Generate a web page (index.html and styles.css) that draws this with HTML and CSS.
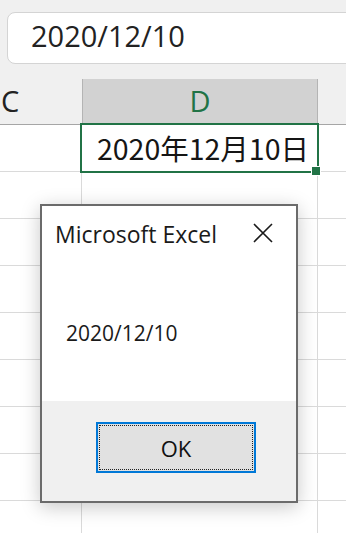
FILE: index.html
```html
<!DOCTYPE html>
<html lang="ja">
<head>
    <meta charset="UTF-8">
    <meta name="viewport" content="width=device-width, initial-scale=1.0">
    <title>Microsoft Excel</title>
    <link rel="stylesheet" href="styles.css">
</head>
<body>
    <div class="formula-area">
        <div class="formula-box">2020/12/10</div>
    </div>

    <div class="col-headers">
        <div class="col-head col-c">C</div>
        <div class="col-head col-d">D</div>
        <div class="col-head"></div>
    </div>

    <div class="sheet">
        <div class="row">
            <div class="cell"></div>
            <div class="cell cell-active">2020年12月10日<span class="fill-handle"></span></div>
            <div class="cell"></div>
        </div>
        <div class="row"><div class="cell"></div><div class="cell"></div><div class="cell"></div></div>
        <div class="row"><div class="cell"></div><div class="cell"></div><div class="cell"></div></div>
        <div class="row"><div class="cell"></div><div class="cell"></div><div class="cell"></div></div>
        <div class="row"><div class="cell"></div><div class="cell"></div><div class="cell"></div></div>
        <div class="row"><div class="cell"></div><div class="cell"></div><div class="cell"></div></div>
        <div class="row"><div class="cell"></div><div class="cell"></div><div class="cell"></div></div>
        <div class="row"><div class="cell"></div><div class="cell"></div><div class="cell"></div></div>
        <div class="row"><div class="cell"></div><div class="cell"></div><div class="cell"></div></div>
    </div>

    <div class="msgbox">
        <div class="msgbox-top">
            <div class="msgbox-title">
                <span>Microsoft Excel</span>
                <svg class="close-icon" width="20" height="20" viewBox="0 0 20 20">
                    <path d="M1 1 L19 19 M19 1 L1 19" stroke="#1a1a1a" stroke-width="1.6" fill="none"/>
                </svg>
            </div>
            <div class="msgbox-body">2020/12/10</div>
        </div>
        <div class="msgbox-footer">
            <button class="ok-btn"><span class="ok-focus">OK</span></button>
        </div>
    </div>
</body>
</html>
```

FILE: styles.css
```css
body {
    margin: 0;
    padding: 0;
    background-color: #f0f0f0;
    font-family: "Open Sans", "Noto Sans", sans-serif;
    color: #1a1a1a;
    overflow: hidden;
    height: 533px;
    position: relative;
}

.formula-area {
    height: 79px;
    padding: 12px 0 0 7px;
    box-sizing: border-box;
}

.formula-box {
    height: 52px;
    margin-right: -12px;
    box-sizing: border-box;
    background-color: white;
    border: 1px solid #d4d4d4;
    border-radius: 8px;
    padding-left: 23px;
    font-size: 29px;
    line-height: 45px;
    color: #222;
}

.col-headers,
.row {
    display: grid;
    grid-template-columns: 82px 236px 1fr;
}

.col-headers {
    height: 45px;
    border-bottom: 1px solid #a6a6a6;
}

.col-head {
    font-size: 29px;
    line-height: 44px;
    color: #222;
}

.col-c {
    padding-left: 1px;
}

.col-d {
    background-color: #d2d2d2;
    border-left: 1px solid #b4b4b4;
    border-right: 1px solid #b4b4b4;
    text-align: center;
    color: #217346;
}

.sheet {
    background-color: white;
}

.row {
    height: 47px;
    border-bottom: 1px solid #dadada;
    box-sizing: border-box;
}

.cell {
    border-right: 1px solid #dadada;
}

.cell:last-child {
    border-right: none;
}

.cell-active {
    position: relative;
    font-family: "Noto Sans CJK JP", sans-serif;
    font-size: 28.5px;
    line-height: 46px;
    text-align: right;
    padding-right: 8px;
    color: #151515;
}

.cell-active::after {
    content: "";
    position: absolute;
    left: -2px;
    top: -2px;
    right: -2px;
    bottom: -2px;
    border: 2.5px solid #217346;
}

.fill-handle {
    position: absolute;
    right: -4px;
    bottom: -5px;
    width: 8px;
    height: 8px;
    background-color: #217346;
    border: 1px solid white;
    z-index: 2;
}

.msgbox {
    position: absolute;
    left: 40px;
    top: 204px;
    width: 258px;
    height: 299px;
    box-sizing: border-box;
    border: 2px solid #6b6b6b;
    background-color: white;
    box-shadow: 0 4px 18px rgba(0, 0, 0, 0.22);
    display: flex;
    flex-direction: column;
}

.msgbox-top {
    height: 195px;
}

.msgbox-title {
    display: flex;
    justify-content: space-between;
    align-items: flex-start;
    padding: 17px 23px 0 13px;
    font-size: 23px;
    line-height: 23px;
}

.close-icon {
    display: block;
}

.msgbox-body {
    padding: 77px 0 0 24px;
    font-size: 21px;
    line-height: 21px;
}

.msgbox-footer {
    flex: 1;
    background-color: #f0f0f0;
    padding: 21px 0 0 54px;
}

.ok-btn {
    display: block;
    width: 160px;
    height: 51px;
    border: 2px solid #0078d7;
    background-color: #e1e1e1;
    padding: 1px;
    font-family: "Open Sans", "Noto Sans", sans-serif;
    font-size: 22px;
    color: #111;
}

.ok-focus {
    display: flex;
    align-items: center;
    justify-content: center;
    height: 100%;
    border: 1px dotted #222;
    box-sizing: border-box;
}
```
